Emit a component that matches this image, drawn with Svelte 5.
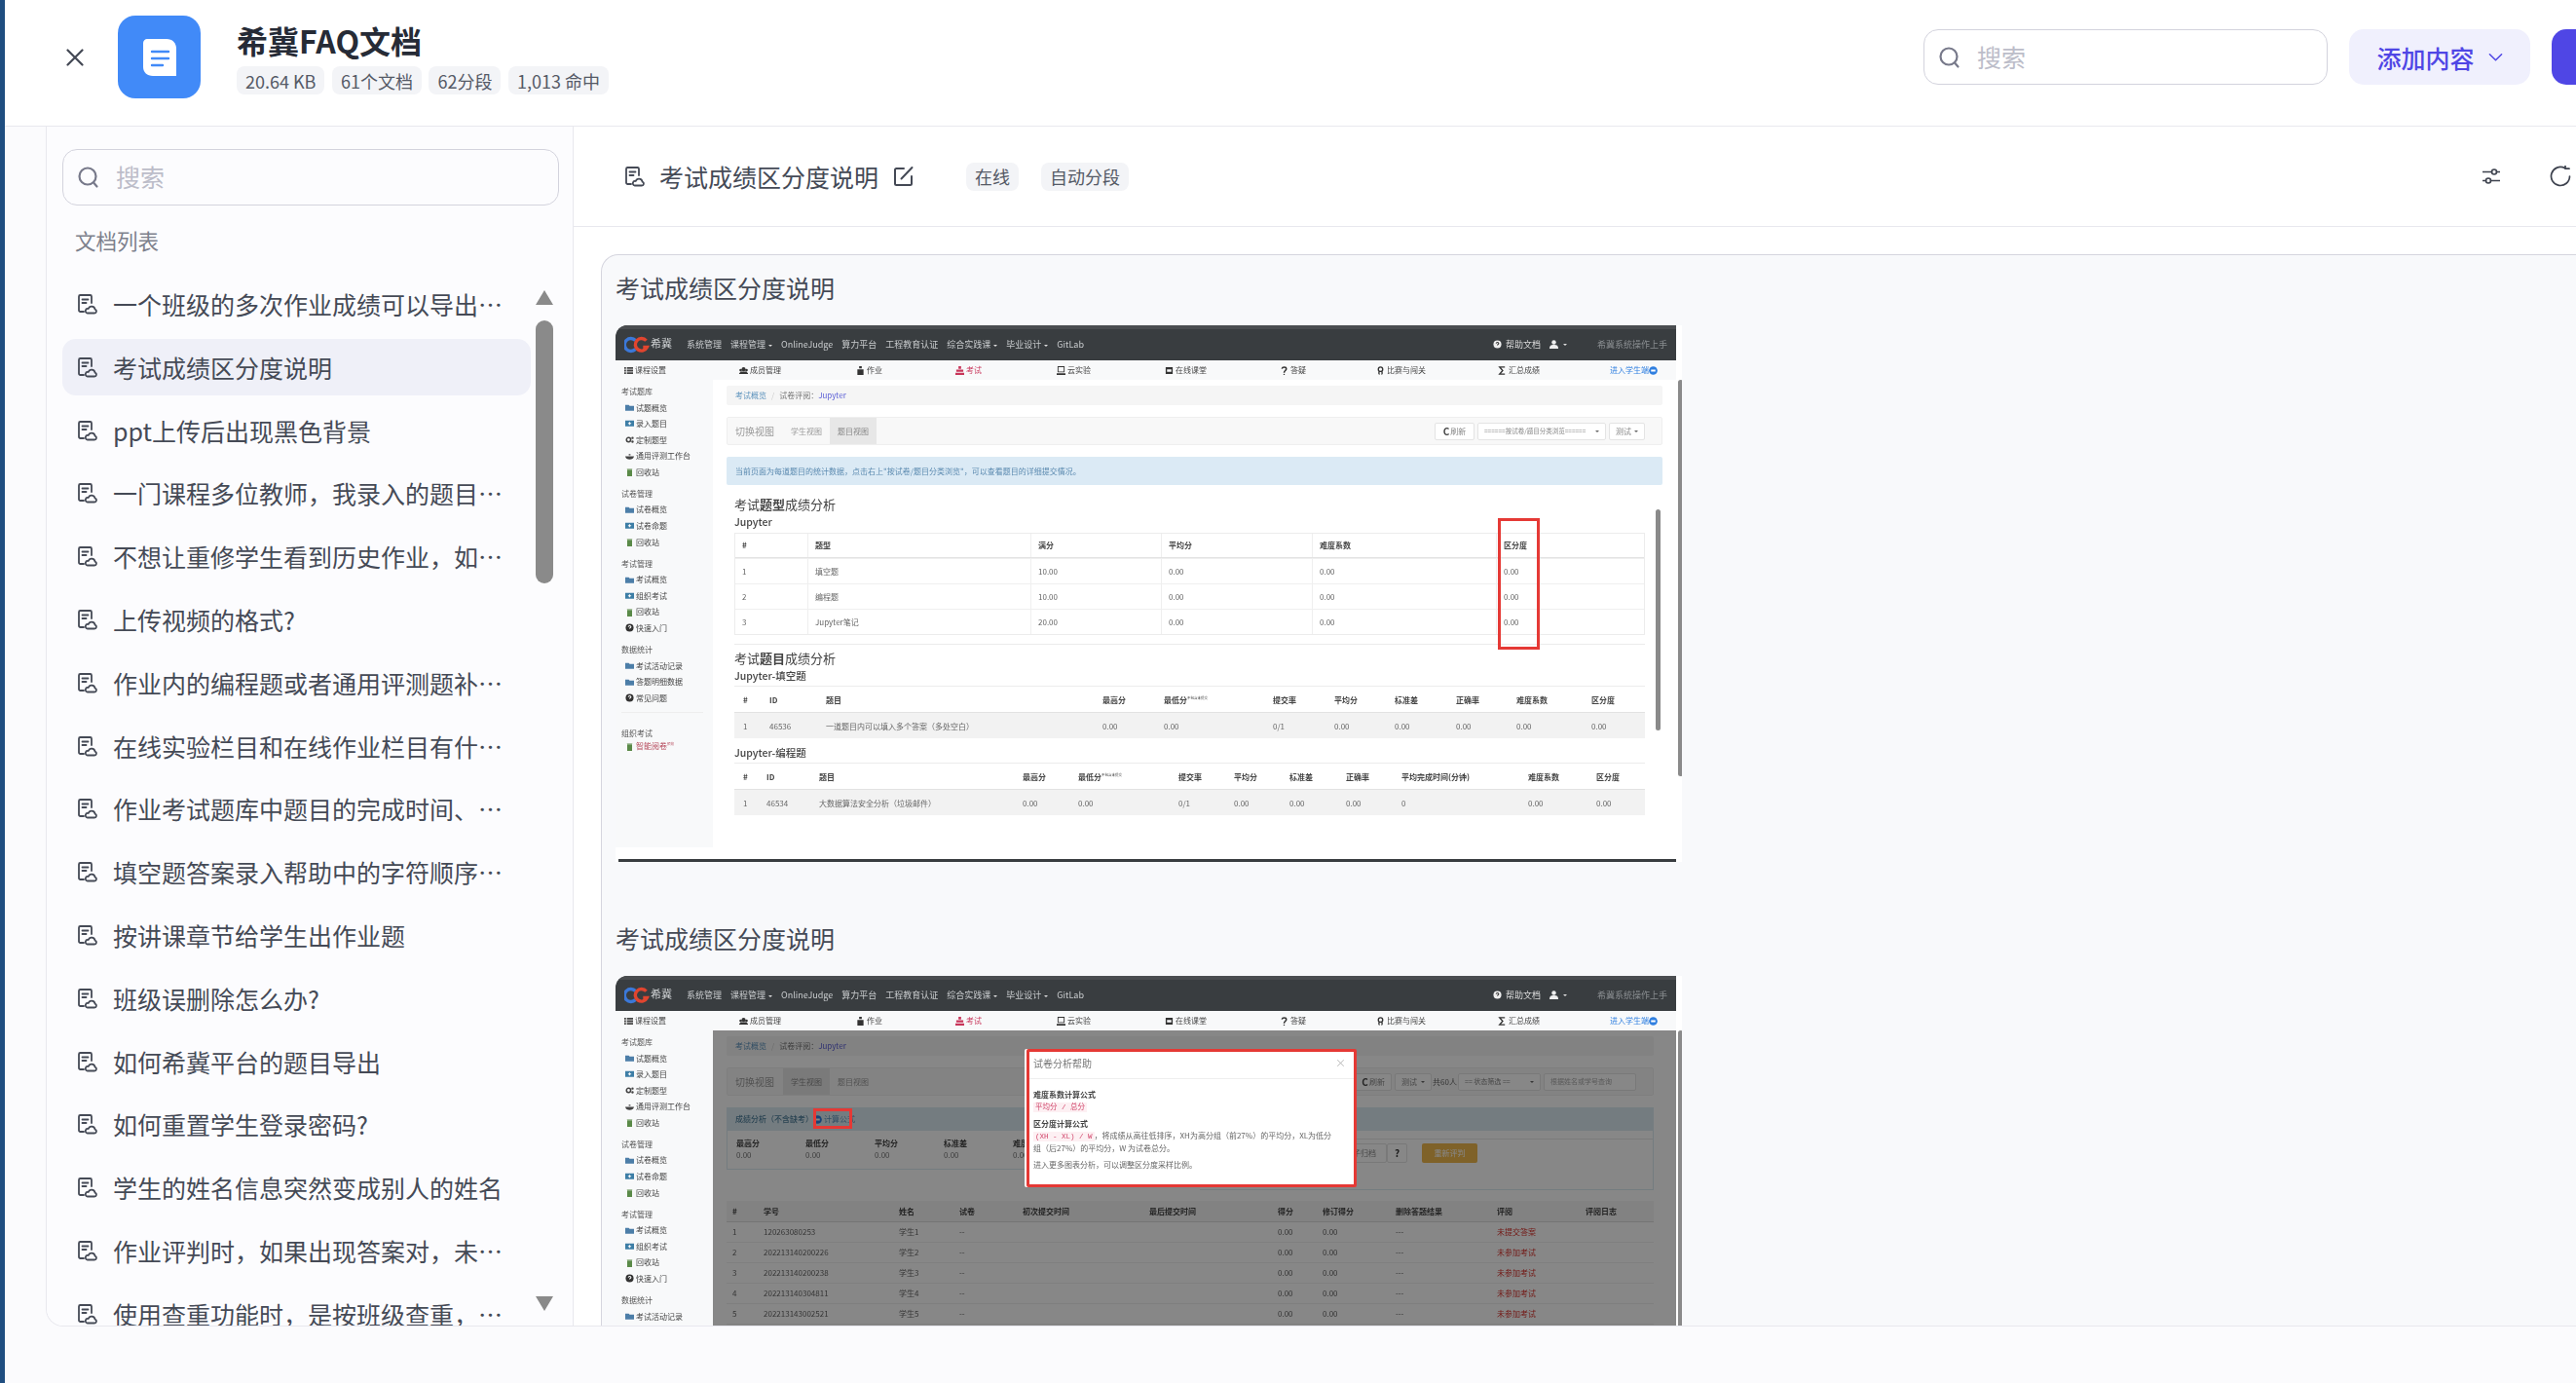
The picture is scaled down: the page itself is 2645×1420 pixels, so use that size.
<script>
	const stats = ['20.64 KB', '61个文档', '62分段', '1,013 命中'];
	const docs = [
		'一个班级的多次作业成绩可以导出吗？如何操作',
		'考试成绩区分度说明',
		'ppt上传后出现黑色背景',
		'一门课程多位教师，我录入的题目其他教师能看到吗',
		'不想让重修学生看到历史作业，如何设置才可以',
		'上传视频的格式?',
		'作业内的编程题或者通用评测题补交如何设置',
		'在线实验栏目和在线作业栏目有什么区别呢',
		'作业考试题库中题目的完成时间、次数如何查看',
		'填空题答案录入帮助中的字符顺序是什么意思',
		'按讲课章节给学生出作业题',
		'班级误删除怎么办?',
		'如何希冀平台的题目导出',
		'如何重置学生登录密码?',
		'学生的姓名信息突然变成别人的姓名',
		'作业评判时，如果出现答案对，未通过的情况',
		'使用查重功能时，是按班级查重，还是按课程查重'
	];

	const topNav = [
		['系统管理', false], ['课程管理', true], ['OnlineJudge', false], ['算力平台', false],
		['工程教育认证', false], ['综合实践课', true], ['毕业设计', true], ['GitLab', false]
	];
	const subNav = [
		['list', '课程设置'], ['users', '成员管理'], ['bag', '作业'], ['exam', '考试'], ['screen', '云实验'],
		['square', '在线课堂'], ['q', '答疑'], ['medal', '比赛与闯关'], ['sigma', '汇总成绩'], ['go', '进入学生端']
	];
	const sideGroups = [
		{ h: '考试题库', items: [['folder', '试题概览'], ['plus', '录入题目'], ['gear', '定制题型'], ['cup', '通用评测工作台'], ['trash', '回收站']] },
		{ h: '试卷管理', items: [['folder', '试卷概览'], ['plus', '试卷命题'], ['trash', '回收站']] },
		{ h: '考试管理', items: [['folder', '考试概览'], ['plus', '组织考试'], ['trash', '回收站'], ['help', '快速入门']] },
		{ h: '数据统计', items: [['folder', '考试活动记录'], ['folder', '答题明细数据'], ['help', '常见问题']] }
	];

	const typeRows = [
		['1', '填空题', '10.00'],
		['2', '编程题', '10.00'],
		['3', 'Jupyter笔记', '20.00']
	];
	const fillHead = ['#', 'ID', '题目', '最高分', '最低分', '提交率', '平均分', '标准差', '正确率', '难度系数', '区分度'];
	const fillRow = ['1', '46536', '一道题目内可以填入多个答案（多处空白）', '0.00', '0.00', '0/1', '0.00', '0.00', '0.00', '0.00', '0.00'];
	const codeHead = ['#', 'ID', '题目', '最高分', '最低分', '提交率', '平均分', '标准差', '正确率', '平均完成时间(分钟)', '难度系数', '区分度'];
	const codeRow = ['1', '46534', '大数据算法安全分析（垃圾邮件）', '0.00', '0.00', '0/1', '0.00', '0.00', '0.00', '0', '0.00', '0.00'];

	const scoreStats = [['最高分', '0.00'], ['最低分', '0.00'], ['平均分', '0.00'], ['标准差', '0.00'], ['难度系数', '0.00']];
	const stuHead = ['#', '学号', '姓名', '试卷', '初次提交时间', '最后提交时间', '得分', '修订得分', '删除答题结果', '评阅', '评阅日志'];
	const stuRows = [
		['1', '120263080253', '学生1', '未提交答案'],
		['2', '202213140200226', '学生2', '未参加考试'],
		['3', '202213140200238', '学生3', '未参加考试'],
		['4', '202213140304811', '学生4', '未参加考试'],
		['5', '202213143002521', '学生5', '未参加考试']
	];
</script>

{#snippet docIcon()}
	<svg class="doc-ic" viewBox="0 0 22 22" fill="none" stroke="currentColor" stroke-width="1.8" stroke-linecap="round" stroke-linejoin="round">
		<path d="M7 19H3.5A1.5 1.5 0 0 1 2 17.500V3.500A1.500 1.500 0 0 1 3.500 2h10A1.500 1.500 0 0 1 15 3.500V10" />
		<path d="M5.500 6.500h6M5.500 10h4" />
		<path d="M10.500 20.500h7.500a2 2 0 0 0 .6-3.900 3.600 3.600 0 0 0-6.900-.6 2.300 2.300 0 0 0-1.200 4.500z" />
	</svg>
{/snippet}

{#snippet searchIcon()}
	<svg class="search-ic" viewBox="0 0 24 24" fill="none" stroke="#77798a" stroke-width="2.200" stroke-linecap="round">
		<circle cx="11" cy="11" r="8.500" />
		<path d="M17.500 18l3 3.500" />
	</svg>
{/snippet}

{#snippet mini(kind)}
	<svg class="mini" viewBox="0 0 10 10">
		{#if kind === 'folder'}
			<path fill="#4c7ea8" d="M0 2h4l1 1h5v5.500H0z" />
		{:else if kind === 'plus'}
			<path fill="#3d7ea6" fill-rule="evenodd" d="M0 2h10v6.500H0zM4.300 3.500v1.100H3.200v1.200h1.100v1.100h1.300V5.800h1.200V4.600H5.600V3.500z" />
		{:else if kind === 'gear'}
			<circle cx="3.800" cy="5" r="2.400" fill="none" stroke="#444" stroke-width="1.700" /><circle cx="8.300" cy="3" r="1.300" fill="#444" /><circle cx="8.300" cy="7.200" r="1.300" fill="#444" />
		{:else if kind === 'cup'}
			<path fill="#444" d="M0 5h10C9.500 7.500 7.500 8.500 5 8.500S.5 7.500 0 5zM4 2.500h2V4H4z" />
		{:else if kind === 'trash'}
			<path fill="#5a8a48" d="M2 1h6v.8H2zM2.200 2.500h5.600V10H2.200z" />
		{:else if kind === 'help'}
			<circle cx="5" cy="5" r="4.500" fill="#333" /><path fill="none" stroke="#fff" stroke-width="1.200" d="M3.500 4C3.700 2.300 6.500 2.300 6.500 4 6.500 5 5 5 5 6.200" />
		{:else if kind === 'exam'}
			<path fill="#c8365a" d="M3.500 0h3v3h-3zM1 4h8v2.500H1zM0 7.500h10V10H0z" />
		{:else if kind === 'list'}
			<path fill="#444" d="M0 1h2v2H0zM3 1h7v2H3zM0 4h2v2H0zM3 4h7v2H3zM0 7h2v2H0zM3 7h7v2H3z" />
		{:else if kind === 'users'}
			<circle cx="5" cy="3.500" r="2.300" fill="#333" /><circle cx="1.700" cy="4.500" r="1.500" fill="#333" /><circle cx="8.300" cy="4.500" r="1.500" fill="#333" /><path fill="#333" d="M0 8l2-2h6l2 2v1H0z" />
		{:else if kind === 'bag'}
			<path fill="#333" d="M3.500 0h3v2.500h-3zM1.500 3.500h7V10h-7z" />
		{:else if kind === 'screen'}
			<path fill="#333" fill-rule="evenodd" d="M1 0h8v7H1zM2 1v5h6V1zM0 8h10v2H0z" />
		{:else if kind === 'square'}
			<path fill="#333" fill-rule="evenodd" d="M1 1h8v8H1zM2.500 3.500v3h5v-3z" />
		{:else if kind === 'q'}
			<path fill="none" stroke="#333" stroke-width="1.700" d="M2.500 3C3 .5 7.500.5 7.500 3 7.500 5 5 5 5 7.500" /><circle cx="5" cy="9.300" r=".8" fill="#333" />
		{:else if kind === 'medal'}
			<circle cx="5" cy="3.500" r="2.500" fill="none" stroke="#333" stroke-width="1.500" /><path fill="#333" d="M2.500 6h1.500v4l-1.500-1zM6 6h1.500v3L6 10z" />
		{:else if kind === 'sigma'}
			<path fill="none" stroke="#333" stroke-width="1.500" d="M8 1H2l3.500 4L2 9h6" />
		{:else if kind === 'go'}
			<circle cx="5" cy="5" r="4.800" fill="#2f7fe0" /><path fill="#fff" d="M2.500 4h5v2h-5z" />
		{/if}
	</svg>
{/snippet}

{#snippet chrome()}
	<div class="s-top">
		<div class="s-logo">
			<svg viewBox="0 0 26 18" class="s-mark" fill="none" stroke-width="3.400">
				<path stroke="#3b78d8" d="M11.500 4.500a6.500 6.500 0 1 0 0 9" />
				<path stroke="#e0452f" d="M22.500 4.800a6.300 6.300 0 1 0 .8 6.700h-4" />
			</svg>
			<span class="s-brand">希冀</span>
		</div>
		<nav class="s-nav">
			{#each topNav as [label, caret]}
				<span class="s-nav-item">{label}{#if caret}<i class="caret"></i>{/if}</span>
			{/each}
		</nav>
		<div class="s-right">
			<span class="s-help">{@render mini('help')}帮助文档</span>
			<span class="s-user"><svg viewBox="0 0 10 10" class="mini"><circle cx="5" cy="2.800" r="2.500" fill="#eee" /><path fill="#eee" d="M0 10c0-4 2-4.500 5-4.500s5 .5 5 4.500z" /></svg><i class="caret"></i></span>
			<span class="s-guide">希冀系统操作上手</span>
		</div>
	</div>
	<div class="s-sub">
		{#each subNav as [kind, label]}
			<span class="s-sub-item" class:red={kind === 'exam'} class:blue={kind === 'go'}>
				{#if kind !== 'go'}{@render mini(kind)}{/if}{label}{#if kind === 'go'}{@render mini(kind)}{/if}
			</span>
		{/each}
	</div>
{/snippet}

{#snippet sidebar()}
	<aside class="s-side">
		{#each sideGroups as g}
			<div class="s-group">
				<div class="s-h">{g.h}</div>
				{#each g.items as [kind, label]}
					<div class="s-link">{@render mini(kind)}{label}</div>
				{/each}
			</div>
		{/each}
		<div class="s-rule"></div>
		<div class="s-h">组织考试</div>
		<div class="s-link smart">{@render mini('trash')}智能阅卷<sup>预览</sup></div>
	</aside>
{/snippet}

{#snippet crumb()}
	<div class="s-crumb"><span class="lnk">考试概览</span><span class="sl">/</span>试卷评阅：<span class="ju">Jupyter</span></div>
{/snippet}

<div class="app">
	<div class="strip"></div>
	<div class="main">
		<header class="head">
			<svg class="close" viewBox="0 0 18 18" fill="none" stroke="#444955" stroke-width="2.200" stroke-linecap="round">
				<path d="M1.500 1.500l15 15M16.500 1.500l-15 15" />
			</svg>
			<div class="logo">
				<svg viewBox="0 0 34 38" width="34" height="38">
					<path fill="#fff" d="M4 0h20c6 0 10 4 10 10v28H10C4 38 0 34 0 29V4C0 2 2 0 4 0z" />
					<path fill="none" stroke="#418af8" stroke-width="2.400" stroke-linecap="round" d="M9 13h17M9 20h17M9 27h11" />
				</svg>
			</div>
			<div class="info">
				<h1>希冀FAQ文档</h1>
				<div class="tags">
					{#each stats as s}<span class="tag">{s}</span>{/each}
				</div>
			</div>
			<div class="actions">
				<label class="search top">{@render searchIcon()}<input placeholder="搜索" /></label>
				<button class="add">添加内容
					<svg viewBox="0 0 16 10" width="15" height="10" fill="none" stroke="#4f46e5" stroke-width="1.600" stroke-linecap="round" stroke-linejoin="round"><path d="M1.500 1.500L8 8l6.500-6.500" /></svg>
				</button>
				<button class="primary" aria-label="primary"></button>
			</div>
		</header>

		<section class="panel">
			<div class="left">
				<label class="search side">{@render searchIcon()}<input placeholder="搜索" /></label>
				<div class="label">文档列表</div>
				<ul class="docs">
					{#each docs as d, i}
						<li class="doc" class:active={i === 1}>{@render docIcon()}<span class="doc-t">{d}</span></li>
					{/each}
				</ul>
				<div class="sb">
					<i class="arr up"></i>
					<i class="thumb"></i>
					<i class="arr down"></i>
				</div>
			</div>

			<div class="right">
				<div class="bar">
					{@render docIcon()}
					<span class="bar-t">考试成绩区分度说明</span>
					<svg class="edit" viewBox="0 0 22 22" fill="none" stroke="#444955" stroke-width="2" stroke-linecap="round">
						<path d="M11 3H3.500A1.500 1.500 0 0 0 2 4.500v14A1.500 1.500 0 0 0 3.500 20h14a1.500 1.500 0 0 0 1.500-1.500V11" />
						<path d="M8.500 13.500L19.500 2" />
					</svg>
					<span class="tag b1">在线</span>
					<span class="tag b2">自动分段</span>
					<svg class="tune" viewBox="0 0 18 18" fill="none" stroke="#3d424e" stroke-width="1.600" stroke-linecap="round">
						<path d="M.5 4.500h9M14.500 4.500h3M.5 13.500h3M8.500 13.500h9" /><circle cx="12" cy="4.500" r="2.500" /><circle cx="6" cy="13.500" r="2.500" />
					</svg>
					<svg class="reload" viewBox="0 0 22 22" fill="none" stroke="#3d424e" stroke-width="1.700" stroke-linecap="round" stroke-linejoin="round">
						<path d="M20.500 11a9.500 9.500 0 1 1-5-8.400" /><path d="M16 0v3.200h4" />
					</svg>
				</div>

				<div class="scroll">
					<div class="card">
						<h2>考试成绩区分度说明</h2>
						<!-- first embedded screenshot: question view -->
						<div class="shot">
							{@render chrome()}
							<div class="s-body">
								{@render sidebar()}
								<div class="s-main">
									{@render crumb()}
									<div class="s-tabs">
										<span class="s-tabs-t">切换视图</span>
										<span class="s-tab first">学生视图</span>
										<span class="s-tab on">题目视图</span>
										<div class="s-ctls">
											<span class="ctl r1"><b>C</b>刷新</span>
											<span class="ctl r2">======按试卷/题目分类浏览======<i class="caret dk"></i></span>
											<span class="ctl r3">测试<i class="caret dk"></i></span>
										</div>
									</div>
									<div class="s-alert">当前页面为每道题目的统计数据，点击右上"按试卷/题目分类浏览"，可以查看题目的详细提交情况。</div>
									<div class="s-inner">
										<h4>考试<b>题型</b>成绩分析</h4>
										<h5>Jupyter</h5>
										<div class="t1">
											<div class="t1-r th"><span>#</span><span>题型</span><span>满分</span><span>平均分</span><span>难度系数</span><span>区分度</span></div>
											{#each typeRows as r}
												<div class="t1-r"><span>{r[0]}</span><span>{r[1]}</span><span>{r[2]}</span><span>0.00</span><span>0.00</span><span>0.00</span></div>
											{/each}
										</div>
										<div class="s-hr"></div>
										<h4 class="h2nd">考试<b>题目</b>成绩分析</h4>
										<h5 class="sub">Jupyter-填空题</h5>
										<div class="t2 fill th">
											{#each fillHead as c, i}<span>{c}{#if i === 4}<sup>不包含未提交</sup>{/if}</span>{/each}
										</div>
										<div class="t2 fill td">{#each fillRow as c}<span>{c}</span>{/each}</div>
										<h5 class="sub two">Jupyter-编程题</h5>
										<div class="t2 code th">
											{#each codeHead as c, i}<span>{c}{#if i === 4}<sup>不包含未提交</sup>{/if}</span>{/each}
										</div>
										<div class="t2 code td">{#each codeRow as c}<span>{c}</span>{/each}</div>
									</div>
								</div>
							</div>
							<div class="s-foot"></div>
							<i class="s-bar outer"></i>
							<i class="s-bar inner"></i>
							<i class="redbox col"></i>
						</div>

						<h2 class="second">考试成绩区分度说明</h2>
						<!-- second embedded screenshot: help modal over student view -->
						<div class="shot">
							{@render chrome()}
							<div class="s-body">
								{@render sidebar()}
								<div class="s-main narrow">
									{@render crumb()}
									<div class="s-tabs">
										<span class="s-tabs-t">切换视图</span>
										<span class="s-tab on stu">学生视图</span>
										<span class="s-tab">题目视图</span>
										<div class="s-ctls">
											<span class="ctl q1"><b>C</b>刷新</span>
											<span class="ctl q2">测试<i class="caret dk"></i></span>
											<span class="count">共60人</span>
											<span class="ctl q3">== 状态筛选 ==<i class="caret dk"></i></span>
											<span class="ctl q4">根据姓名或学号查询</span>
										</div>
									</div>
									<div class="s-pan">
										<div class="s-pan-h">成绩分析（不含缺考）<span class="formula">{@render mini('go')}计算公式</span></div>
										<div class="s-pan-b">
											<div class="s-pan-l">
												{#each scoreStats as [k, v]}
													<div class="stat"><b>{k}</b><span>{v}</span></div>
												{/each}
											</div>
											<div class="s-pan-r">
												<span class="ctl arch">电子归档</span>
												<span class="ctl qbtn">?</span>
												<span class="regrade">重新评判</span>
											</div>
										</div>
									</div>
									<div class="t3 th">{#each stuHead as c}<span>{c}</span>{/each}</div>
									{#each stuRows as r}
										<div class="t3">
											<span>{r[0]}</span><span>{r[1]}</span><span>{r[2]}</span><span>--</span><span></span><span></span><span>0.00</span><span>0.00</span><span>---</span><span class="err">{r[3]}</span><span></span>
										</div>
									{/each}
									<div class="dim"></div>
								</div>
							</div>
							<i class="s-bar outer"></i>
							<i class="redbox link"></i>
							<div class="modal">
								<div class="m-h"><span>试卷分析帮助</span><span class="m-x">×</span></div>
								<div class="m-b">
									<b>难度系数计算公式</b>
									<p><code>平均分 / 总分</code></p>
									<b class="gap">区分度计算公式</b>
									<p><code>(XH - XL) / W</code>，将成绩从高往低排序，XH为高分组（前27%）的平均分，XL为低分组（后27%）的平均分，W 为试卷总分。</p>
									<p class="gap">进入更多图表分析，可以调整区分度采样比例。</p>
								</div>
							</div>
						</div>
					</div>
				</div>
			</div>
		</section>
	</div>
</div>

<style>
	:global(body) {
		overflow: hidden;
		background: #fbfbfd;
	}
	.app {
		display: flex;
		width: 2745px;
		height: 1420px;
		font-family: 'Noto Sans CJK SC', 'Noto Sans', sans-serif;
		color: #454a56;
		background: #fbfbfd;
	}
	.strip {
		width: 5px;
		flex: none;
		background: #1f4e80;
	}
	.main {
		flex: 1;
		min-width: 0;
		display: flex;
		flex-direction: column;
	}

	/* page header */
	.head {
		height: 130px;
		flex: none;
		box-sizing: border-box;
		display: flex;
		align-items: flex-start;
		padding: 16px 0 0 63px;
		background: #fff;
		border-bottom: 1px solid #e8e8ee;
	}
	.close {
		width: 18px;
		height: 18px;
		margin: 34px 35px 0 0;
		flex: none;
	}
	.logo {
		width: 85px;
		height: 85px;
		border-radius: 18px;
		background: #418af8;
		display: flex;
		align-items: center;
		justify-content: center;
		margin-right: 37px;
		flex: none;
	}
	.info h1 {
		margin: 3px 0 0;
		font-size: 32px;
		line-height: 44px;
		font-weight: 700;
		color: #262b36;
	}
	.tags {
		display: flex;
		gap: 7.500px;
		margin-top: 5px;
	}
	.tag {
		display: inline-flex;
		align-items: center;
		height: 29px;
		padding: 0 9px;
		border-radius: 8px;
		background: #f3f4f7;
		color: #555a66;
		font-size: 18px;
		white-space: nowrap;
	}
	.actions {
		margin-left: auto;
		margin-top: 14px;
		display: flex;
		gap: 22px;
	}
	.search {
		display: flex;
		align-items: center;
		box-sizing: border-box;
		height: 57px;
		background: #fff;
		border: 1px solid #d3d3dd;
		border-radius: 15px;
		padding-left: 14px;
		gap: 16px;
	}
	.search.top {
		width: 415px;
	}
	.search.side {
		width: 510px;
		height: 58px;
		margin: 23px 0 0 16px;
		background: #fcfcfe;
	}
	.search-ic {
		width: 24px;
		height: 24px;
		flex: none;
	}
	.search input {
		flex: 1;
		min-width: 0;
		border: 0;
		outline: 0;
		background: transparent;
		font: inherit;
		font-size: 25px;
		padding: 0 0 2px;
	}
	.search input::placeholder {
		color: #bcbdc9;
	}
	.add {
		width: 186px;
		height: 57px;
		border: 0;
		border-radius: 15px;
		background: #f0f0fd;
		color: #4f46e5;
		font: inherit;
		font-size: 25px;
		font-weight: 500;
		display: flex;
		align-items: center;
		justify-content: center;
		gap: 14px;
		padding: 0;
	}
	.primary {
		width: 125px;
		height: 57px;
		border: 0;
		border-radius: 15px;
		background: #4f46e5;
	}

	/* panel */
	.panel {
		height: 1232px;
		margin-left: 42px;
		display: flex;
		flex: none;
		box-sizing: border-box;
		background: #fff;
		border: 1px solid #e8e8ee;
		border-width: 0 0 1px 1px;
		border-radius: 0 0 0 18px;
		overflow: hidden;
	}
	.left {
		width: 541px;
		flex: none;
		box-sizing: border-box;
		position: relative;
		background: #fcfcfe;
		border-right: 1px solid #e8e8ee;
		overflow: hidden;
	}
	.label {
		margin: 21px 0 0 29px;
		font-size: 21.500px;
		line-height: 30px;
		color: #7c808c;
	}
	.docs {
		list-style: none;
		margin: 21px 0 0 16px;
		padding: 0;
		width: 481px;
	}
	.doc {
		height: 58px;
		margin-bottom: 6.800px;
		padding-left: 15px;
		display: flex;
		align-items: center;
		gap: 15px;
		border-radius: 14px;
		font-size: 25px;
	}
	.doc.active {
		background: #eff0f8;
	}
	.doc-ic {
		width: 22px;
		height: 22px;
		flex: none;
		color: #454a56;
	}
	.doc-t {
		width: 403px;
		overflow: hidden;
		white-space: nowrap;
		text-overflow: ellipsis;
	}
	.sb {
		position: absolute;
		left: 502px;
		top: 168px;
		bottom: 15px;
		width: 18px;
	}
	.thumb {
		position: absolute;
		top: 31px;
		left: 0;
		width: 18px;
		height: 270px;
		border-radius: 9px;
		background: #8a8a8a;
	}
	.arr {
		position: absolute;
		left: 0;
		width: 0;
		height: 0;
		border-left: 9px solid transparent;
		border-right: 9px solid transparent;
	}
	.arr.up {
		top: 0;
		border-bottom: 15px solid #8a8a8a;
	}
	.arr.down {
		bottom: 0;
		border-top: 15px solid #8a8a8a;
	}

	.right {
		flex: 1;
		min-width: 0;
		display: flex;
		flex-direction: column;
	}
	.bar {
		height: 103px;
		flex: none;
		box-sizing: border-box;
		display: flex;
		align-items: center;
		padding: 0 105px 0 52px;
		border-bottom: 1px solid #e8e8ee;
		background: #fff;
	}
	.bar-t {
		font-size: 25px;
		margin-left: 14px;
		width: 225px;
		white-space: nowrap;
	}
	.edit {
		width: 22px;
		height: 22px;
		margin-left: 15px;
	}
	.b1 {
		margin-left: 53px;
	}
	.b2 {
		margin-left: 23px;
	}
	.tune {
		width: 18px;
		height: 18px;
		margin-left: auto;
	}
	.reload {
		width: 22px;
		height: 22px;
		margin-left: 51px;
	}
	.scroll {
		padding: 28px 0 0 28px;
		flex: 1;
		min-height: 0;
	}
	.card {
		height: 100%;
		box-sizing: border-box;
		background: #f8f9fb;
		border: 1px solid #d5d5de;
		border-width: 1px 0 0 1px;
		border-radius: 18px 0 0 0;
		padding: 15px 0 0 14px;
	}
	.card h2 {
		margin: 0 0 21px;
		font-size: 25px;
		font-weight: 400;
		line-height: 36px;
		color: #454a56;
	}
	.card h2.second {
		margin-top: 60px;
	}

	/* embedded screenshots */
	.shot {
		position: relative;
		width: 1095px;
		height: 551px;
		background: #fff;
		border-top-left-radius: 12px;
		font-size: 8px;
		line-height: 1.2;
		color: #555;
		filter: blur(0.3px);
		overflow: hidden;
	}
	.s-top {
		width: 1089px;
		height: 36px;
		box-sizing: border-box;
		background: #393d40;
		border-top: 4px solid #4a4d50;
		display: flex;
		align-items: center;
		padding-left: 9px;
		color: #c9ccce;
		font-size: 9px;
	}
	.s-logo {
		width: 64px;
		display: flex;
		align-items: center;
		flex: none;
	}
	.s-mark {
		width: 26px;
		height: 18px;
	}
	.s-brand {
		font-family: 'Liberation Serif', 'Noto Sans CJK SC', serif;
		font-size: 11px;
		color: #d0d3d5;
		margin-left: 1px;
	}
	.s-nav {
		display: flex;
		gap: 9px;
	}
	.s-nav-item {
		white-space: nowrap;
	}
	.caret {
		display: inline-block;
		width: 0;
		height: 0;
		margin-left: 3px;
		vertical-align: 1px;
		border-left: 2.500px solid transparent;
		border-right: 2.500px solid transparent;
		border-top: 2.500px solid #ddd;
	}
	.caret.dk {
		border-top-color: #666;
	}
	.s-right {
		margin-left: auto;
		display: flex;
		align-items: center;
		padding-right: 9px;
	}
	.s-help {
		display: flex;
		align-items: center;
		gap: 2px;
		color: #ddd;
		margin-right: 9px;
	}
	.s-help :global(circle) {
		fill: #eee;
	}
	.s-help :global(path) {
		stroke: #333;
	}
	.s-user {
		display: flex;
		align-items: center;
		margin-right: 31px;
	}
	.s-guide {
		color: #8a8e91;
	}
	.mini {
		width: 9px;
		height: 9px;
		flex: none;
		margin-right: 2px;
	}
	.s-sub {
		width: 1089px;
		height: 20px;
		box-sizing: border-box;
		display: grid;
		grid-template-columns: 118px 120px 102px 104px 111px 118px 99px 125px 115px 1fr;
		align-items: center;
		padding: 0 0 0 9px;
		background: #f8f9fa;
		color: #444;
	}
	.s-sub-item {
		display: flex;
		align-items: center;
		white-space: nowrap;
	}
	.s-sub-item.red {
		color: #c8365a;
	}
	.s-sub-item.blue {
		color: #2f7fe0;
	}
	.s-body {
		display: flex;
		width: 1089px;
		height: 480px;
	}
	.s-side {
		width: 100px;
		flex: none;
		box-sizing: border-box;
		padding: 4px 0 0 6px;
		background: #f8f9fa;
		color: #444;
	}
	.s-group {
		margin-bottom: 6px;
	}
	.s-h {
		height: 16px;
		line-height: 16px;
		color: #555;
	}
	.s-link {
		height: 16.600px;
		display: flex;
		align-items: center;
		padding-left: 4px;
		white-space: nowrap;
	}
	.s-link.smart {
		color: #b5485a;
		margin-top: -3px;
	}
	.s-link sup {
		font-size: 3.500px;
		align-self: flex-start;
		margin-top: 4px;
	}
	.s-rule {
		height: 1px;
		background: #eee;
		margin: 5px 0 13px;
		width: 84px;
	}
	.s-main {
		position: relative;
		flex: 1;
		min-width: 0;
		background: #fff;
		box-sizing: border-box;
		padding: 6px 14px 0;
	}
	.s-main.narrow {
		padding-right: 23px;
	}
	.s-crumb {
		height: 20px;
		display: flex;
		align-items: center;
		padding-left: 9px;
		background: #f5f5f5;
		border-radius: 2px;
		color: #777;
	}
	.s-crumb .lnk {
		color: #5d93bd;
	}
	.s-crumb .sl {
		color: #ccc;
		margin: 0 5px;
	}
	.s-crumb .ju {
		color: #5b5fd6;
	}
	.s-tabs {
		height: 29px;
		margin-top: 12px;
		box-sizing: border-box;
		display: flex;
		align-items: stretch;
		background: #f8f8f8;
		border: 1px solid #efefef;
		border-radius: 2px;
		padding-left: 8px;
		color: #9a9a9a;
	}
	.s-tabs-t {
		font-size: 10px;
		line-height: 27px;
		width: 41px;
		flex: none;
	}
	.s-tab {
		line-height: 27px;
		padding: 0 8px;
		flex: none;
	}
	.s-tab.first {
		margin-left: 8px;
	}
	.s-tab.on {
		background: #e7e7e7;
		color: #888;
	}
	.s-tab.stu {
		margin-left: 8px;
	}
	.s-ctls {
		margin-left: auto;
		padding-right: 17px;
		display: flex;
		align-items: center;
		gap: 3px;
	}
	.ctl {
		box-sizing: border-box;
		height: 18px;
		display: flex;
		align-items: center;
		justify-content: space-between;
		border: 1px solid #e4e4e4;
		border-radius: 2px;
		background: #fff;
		padding: 0 6px;
		color: #888;
		white-space: nowrap;
		font-size: 7px;
	}
	.ctl b {
		color: #444;
		font-size: 10px;
	}
	.r1 {
		width: 41px;
		font-size: 8px;
		justify-content: center;
		gap: 1px;
	}
	.r2 {
		width: 132px;
		font-size: 6.500px;
	}
	.r3 {
		width: 37px;
		font-size: 8px;
	}
	.q1 {
		width: 38px;
		font-size: 8px;
		justify-content: center;
		gap: 1px;
	}
	.q2 {
		width: 38px;
		font-size: 8px;
	}
	.q3 {
		width: 85px;
		font-size: 7px;
	}
	.q4 {
		width: 95px;
		font-size: 7px;
		color: #aaa;
	}
	.count {
		color: #666;
		margin: 0 -2px;
	}
	.s-alert {
		height: 29px;
		margin-top: 12px;
		padding-left: 9px;
		background: #dbeaf5;
		border-radius: 2px;
		line-height: 29px;
		color: #5b8ab0;
		white-space: nowrap;
	}
	.s-inner {
		padding: 10px 18px 0 8px;
	}
	.s-inner h4 {
		margin: 0;
		height: 20px;
		font-size: 13px;
		line-height: 20px;
		font-weight: 400;
		color: #444;
	}
	.s-inner h4.h2nd {
		margin-top: 4px;
	}
	.s-inner h4 b {
		font-weight: 700;
	}
	.s-inner h5 {
		margin: 1px 0 4px;
		height: 14px;
		font-size: 10.500px;
		line-height: 14px;
		font-weight: 500;
		color: #444;
	}
	.s-inner h5.sub {
		margin: 0 0 2px;
		height: 16px;
		line-height: 16px;
	}
	.s-inner h5.two {
		margin: 7px 0 2px;
	}
	.t1 {
		border: 1px solid #ececec;
		border-bottom-width: 1px;
	}
	.t1-r {
		display: grid;
		grid-template-columns: 74px 229px 134px 155px 189px 1fr;
		height: 26.300px;
		align-items: stretch;
		border-top: 1px solid #efefef;
		box-sizing: border-box;
		color: #666;
	}
	.t1-r.th {
		height: 24.500px;
		border-top: 0;
		border-bottom: 1px solid #e3e3e3;
		font-weight: 700;
		color: #444;
	}
	.t1-r span {
		padding-left: 7px;
		line-height: 25px;
		border-left: 1px solid #efefef;
	}
	.t1-r.th span {
		line-height: 23.500px;
	}
	.t1-r span:first-child {
		border-left: 0;
	}
	.s-hr {
		height: 1px;
		background: #ececec;
		margin-top: 9px;
	}
	.t2 {
		display: grid;
		box-sizing: border-box;
		height: 27px;
		padding-left: 9px;
		align-items: center;
		white-space: nowrap;
	}
	.t2.th {
		border-top: 1px solid #ececec;
		font-weight: 700;
		color: #444;
	}
	.t2.td {
		background: #f2f2f2;
		border-top: 1px solid #e2e2e2;
		color: #666;
	}
	.t2 sup {
		font-size: 3.500px;
		font-weight: 400;
		vertical-align: 4px;
		line-height: 0;
	}
	.t2.fill {
		grid-template-columns: 27px 58px 284px 63px 112px 63px 62px 63px 62px 77px 1fr;
	}
	.t2.code {
		grid-template-columns: 24px 54px 209px 57px 103px 57px 57px 58px 57px 130px 70px 1fr;
	}
	.s-foot {
		width: 1086px;
		height: 3px;
		margin: 12px 0 0 3px;
		background: #393d40;
	}
	.s-bar {
		position: absolute;
		width: 5px;
		background: #8a8a8a;
		border-radius: 3px;
	}
	.s-bar.outer {
		left: 1091px;
		top: 56px;
		height: 407px;
	}
	.s-bar.inner {
		left: 1068px;
		top: 189px;
		height: 227px;
	}
	.redbox {
		position: absolute;
		box-sizing: border-box;
		border: 3px solid #e53935;
	}
	.redbox.col {
		left: 906px;
		top: 198px;
		width: 43px;
		height: 135px;
	}
	.redbox.link {
		left: 203px;
		top: 136px;
		width: 40px;
		height: 21px;
	}
	.s-pan {
		margin-top: 12px;
		background: #fff;
	}
	.s-pan-h {
		height: 24px;
		display: flex;
		align-items: center;
		padding-left: 9px;
		background: #dcebf1;
		color: #4f7f9c;
		font-weight: 500;
	}
	.formula {
		display: flex;
		align-items: center;
		font-weight: 400;
		color: #5d93bd;
	}
	.s-pan-b {
		display: flex;
		align-items: flex-start;
	}
	.s-pan-l {
		flex: 1;
		height: 40px;
		box-sizing: border-box;
		display: flex;
		padding: 8px 0 0 9px;
		border: 1px solid #dcebf1;
		border-width: 0 0 1px 1px;
	}
	.stat {
		width: 71px;
		display: flex;
		flex-direction: column;
		gap: 2px;
		color: #777;
	}
	.stat b {
		color: #444;
	}
	.s-pan-r {
		width: 466px;
		height: 61px;
		box-sizing: border-box;
		border: 1px solid #dcebf1;
		border-width: 0 1px 1px 0;
		display: flex;
		align-items: flex-start;
		padding: 13px 0 0 146px;
		background: linear-gradient(#e8e8e8, #e8e8e8) no-repeat 0 8px / 100% 1px;
	}
	.arch {
		height: 20px;
		width: 46px;
		font-size: 8px;
		padding: 0 2px;
	}
	.qbtn {
		height: 20px;
		width: 21px;
		font-size: 10px;
		font-weight: 700;
		color: #333;
		justify-content: center;
	}
	.regrade {
		height: 20px;
		width: 57px;
		margin-left: 15px;
		border-radius: 2px;
		background: #f0b94f;
		color: #fff;
		line-height: 20px;
		text-align: center;
	}
	.t3 {
		display: grid;
		grid-template-columns: 32px 139px 62px 65px 130px 132px 46px 75px 104px 91px 1fr;
		height: 21px;
		box-sizing: border-box;
		padding-left: 6px;
		align-items: center;
		white-space: nowrap;
		border-bottom: 1px solid #f0f0f0;
		color: #666;
	}
	.t3.th {
		margin-top: 11px;
		height: 22px;
		background: #f5f5f5;
		border-bottom: 1px solid #ddd;
		font-weight: 700;
		color: #444;
	}
	.t3 .err {
		color: #d9302a;
	}
	.dim {
		position: absolute;
		inset: 0;
		background: rgba(0, 0, 0, 0.47);
	}
	.modal {
		position: absolute;
		left: 422px;
		top: 75px;
		width: 339px;
		height: 142px;
		box-sizing: border-box;
		background: #fff;
		border: 3px solid #e53935;
		border-radius: 2px;
		box-shadow: -2px 0 0 #fff;
	}
	.m-h {
		height: 28px;
		display: flex;
		justify-content: space-between;
		align-items: center;
		padding: 0 8px 4px 4px;
		font-size: 10px;
		color: #777;
		border-bottom: 1px solid #eee;
		box-sizing: border-box;
	}
	.m-x {
		color: #bbb;
		font-size: 11px;
	}
	.m-b {
		padding: 10px 17px 0 4px;
		color: #666;
		line-height: 11px;
	}
	.m-b b {
		display: block;
		color: #444;
	}
	.m-b b.gap {
		margin-top: 5px;
	}
	.m-b p {
		margin: 1px 0 0;
	}
	.m-b p.gap {
		margin-top: 6px;
	}
	code {
		font-family: 'Liberation Mono', 'Noto Sans CJK SC', monospace;
		font-size: 7.500px;
		background: #fdf0f3;
		color: #d0456a;
		padding: 1px 2px;
	}
</style>
